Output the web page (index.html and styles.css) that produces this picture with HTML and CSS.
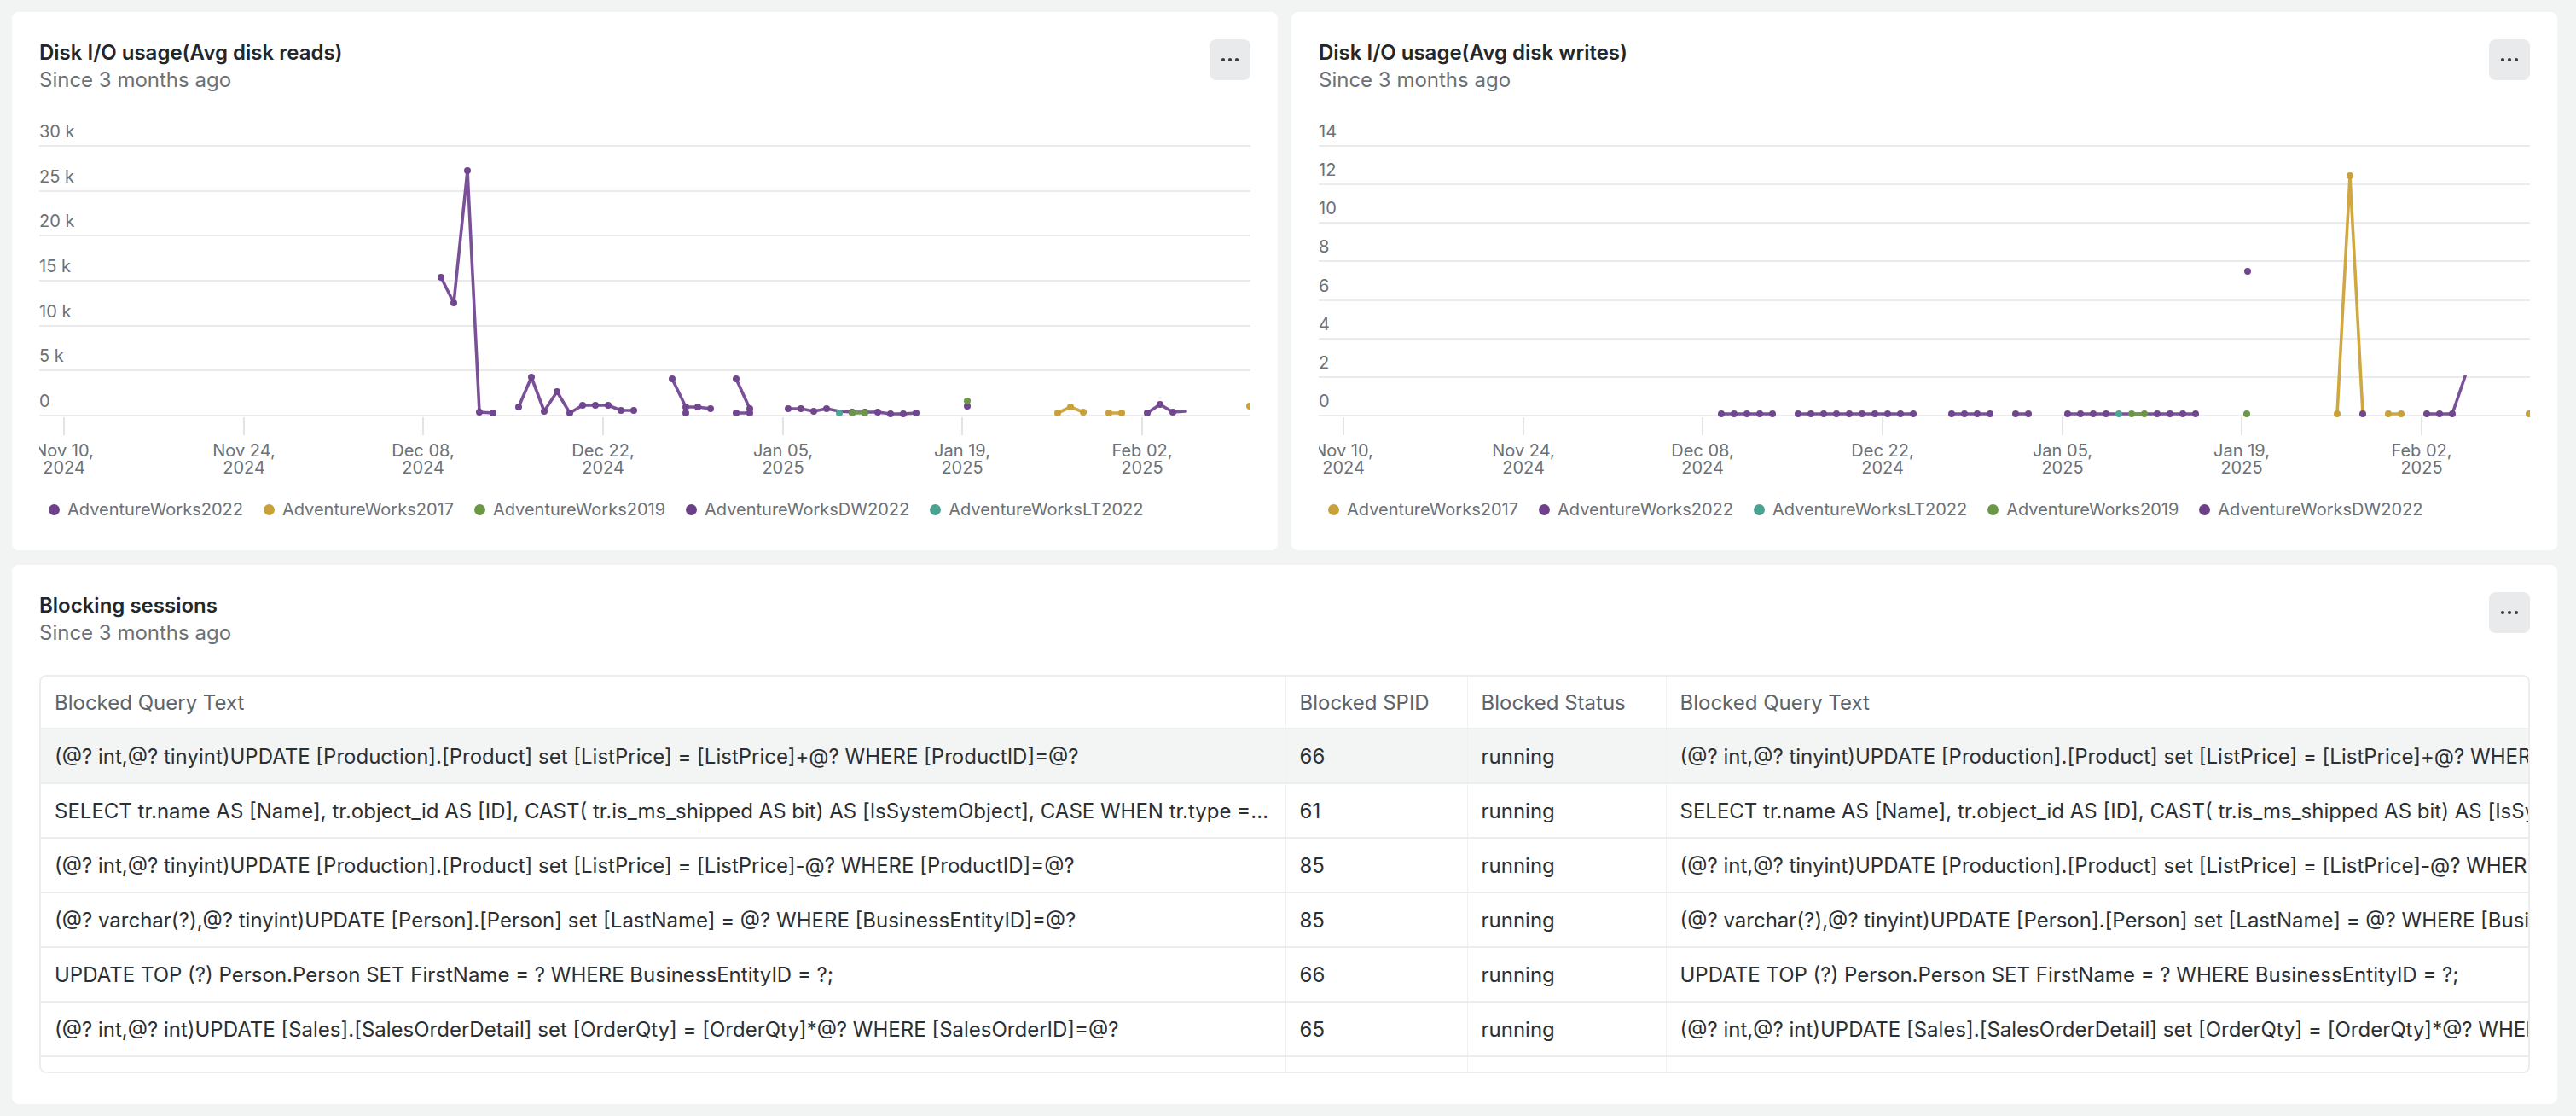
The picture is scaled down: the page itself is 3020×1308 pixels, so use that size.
FILE: index.html
```html
<!DOCTYPE html>
<html lang="en">
<head>
<meta charset="utf-8">
<title>Disk I/O dashboard</title>
<link rel="stylesheet" href="styles.css">
</head>
<body>
<div class="page">
  <div class="top-row">
    <section class="card">
      <header class="card-head">
        <div class="head-text">
          <h2 class="card-title">Disk I/O usage(Avg disk reads)</h2>
          <p class="card-sub">Since 3 months ago</p>
        </div>
        <button class="more" aria-label="More">
          <svg width="24" height="8" viewBox="0 0 24 8"><circle cx="4" cy="4" r="2.1"/><circle cx="12" cy="4" r="2.1"/><circle cx="20" cy="4" r="2.1"/></svg>
        </button>
      </header>
      <svg class="chart" width="1420" height="464" viewBox="0 0 1420 464">
        <g class="grid">
          <line x1="0" y1="61" x2="1420" y2="61"/>
          <line x1="0" y1="114" x2="1420" y2="114"/>
          <line x1="0" y1="166" x2="1420" y2="166"/>
          <line x1="0" y1="219" x2="1420" y2="219"/>
          <line x1="0" y1="272" x2="1420" y2="272"/>
          <line x1="0" y1="324" x2="1420" y2="324"/>
          <line x1="0" y1="377" x2="1420" y2="377"/>
        </g>
        <g class="ylab">
          <text x="0" y="51">30 k</text>
          <text x="0" y="104">25 k</text>
          <text x="0" y="156">20 k</text>
          <text x="0" y="209">15 k</text>
          <text x="0" y="262">10 k</text>
          <text x="0" y="314">5 k</text>
          <text x="0" y="367">0</text>
        </g>
        <g class="ticks">
          <line x1="29" y1="379" x2="29" y2="400"/>
          <line x1="240" y1="379" x2="240" y2="400"/>
          <line x1="450" y1="379" x2="450" y2="400"/>
          <line x1="661" y1="379" x2="661" y2="400"/>
          <line x1="872" y1="379" x2="872" y2="400"/>
          <line x1="1082" y1="379" x2="1082" y2="400"/>
          <line x1="1293" y1="379" x2="1293" y2="400"/>
        </g>
        <g class="xlab">
          <text x="29" y="425">Nov 10,</text><text x="29" y="445">2024</text>
          <text x="240" y="425">Nov 24,</text><text x="240" y="445">2024</text>
          <text x="450" y="425">Dec 08,</text><text x="450" y="445">2024</text>
          <text x="661" y="425">Dec 22,</text><text x="661" y="445">2024</text>
          <text x="872" y="425">Jan 05,</text><text x="872" y="445">2025</text>
          <text x="1082" y="425">Jan 19,</text><text x="1082" y="445">2025</text>
          <text x="1293" y="425">Feb 02,</text><text x="1293" y="445">2025</text>
        </g>
        <g class="s purple">
          <polyline points="471,215 486,245 502,90 516,373 532,374"/>
          <polyline points="562,367 577,332 592,372 607,349 622,374 637,365 652,365 667,365 682,371 697,371"/>
          <polyline points="742,334 758,367 772,367 787,369"/>
          <polyline points="817,334 833,369"/>
          <polyline points="817,374 833,374"/>
          <polyline points="878,369 893,369 908,372 923,369 938,372 953,373 968,373 983,373 998,375 1013,375 1028,374"/>
          <polyline points="1299,374 1314,364 1329,373 1344,372"/>
          <circle cx="471" cy="215" r="4"/><circle cx="486" cy="245" r="4"/><circle cx="502" cy="90" r="4"/><circle cx="516" cy="373" r="4"/><circle cx="532" cy="374" r="4"/>
          <circle cx="562" cy="367" r="4"/><circle cx="577" cy="332" r="4"/><circle cx="592" cy="372" r="4"/><circle cx="607" cy="349" r="4"/><circle cx="622" cy="374" r="4"/><circle cx="637" cy="365" r="4"/><circle cx="652" cy="365" r="4"/><circle cx="667" cy="365" r="4"/><circle cx="682" cy="371" r="4"/><circle cx="697" cy="371" r="4"/>
          <circle cx="742" cy="334" r="4"/><circle cx="758" cy="367" r="4"/><circle cx="772" cy="367" r="4"/><circle cx="787" cy="369" r="4"/><circle cx="758" cy="374" r="4"/>
          <circle cx="817" cy="334" r="4"/><circle cx="833" cy="369" r="4"/><circle cx="817" cy="374" r="4"/><circle cx="833" cy="374" r="4"/>
          <circle cx="878" cy="369" r="4"/><circle cx="893" cy="369" r="4"/><circle cx="908" cy="372" r="4"/><circle cx="923" cy="369" r="4"/><circle cx="953" cy="373" r="4"/><circle cx="968" cy="373" r="4"/><circle cx="983" cy="373" r="4"/><circle cx="998" cy="375" r="4"/><circle cx="1013" cy="375" r="4"/><circle cx="1028" cy="374" r="4"/>
          <circle cx="1088" cy="366" r="4"/>
          <circle cx="1299" cy="374" r="4"/><circle cx="1314" cy="364" r="4"/><circle cx="1329" cy="373" r="4"/>
        </g>
        <g class="s gold">
          <polyline points="1194,374 1209,367 1224,373"/>
          <polyline points="1254,374 1269,374"/>
          <circle cx="1194" cy="374" r="4"/><circle cx="1209" cy="367" r="4"/><circle cx="1224" cy="373" r="4"/>
          <circle cx="1254" cy="374" r="4"/><circle cx="1269" cy="374" r="4"/>
          <circle cx="1419" cy="366" r="4"/>
        </g>
        <g class="s green">
          <polyline points="953,374 968,374"/>
          <circle cx="953" cy="374" r="4"/><circle cx="968" cy="374" r="4"/>
          <circle cx="1088" cy="360" r="4"/>
        </g>
        <g class="s teal">
          <circle cx="938" cy="374" r="4"/>
        </g>
      </svg>
      <ul class="legend">
        <li><span class="dot c-purple"></span>AdventureWorks2022</li>
        <li><span class="dot c-gold"></span>AdventureWorks2017</li>
        <li><span class="dot c-green"></span>AdventureWorks2019</li>
        <li><span class="dot c-purple2"></span>AdventureWorksDW2022</li>
        <li><span class="dot c-teal"></span>AdventureWorksLT2022</li>
      </ul>
    </section>

    <section class="card">
      <header class="card-head">
        <div class="head-text">
          <h2 class="card-title">Disk I/O usage(Avg disk writes)</h2>
          <p class="card-sub">Since 3 months ago</p>
        </div>
        <button class="more" aria-label="More">
          <svg width="24" height="8" viewBox="0 0 24 8"><circle cx="4" cy="4" r="2.1"/><circle cx="12" cy="4" r="2.1"/><circle cx="20" cy="4" r="2.1"/></svg>
        </button>
      </header>
      <svg class="chart" width="1420" height="464" viewBox="0 0 1420 464">
        <g class="grid">
          <line x1="0" y1="61" x2="1420" y2="61"/>
          <line x1="0" y1="106" x2="1420" y2="106"/>
          <line x1="0" y1="151" x2="1420" y2="151"/>
          <line x1="0" y1="196" x2="1420" y2="196"/>
          <line x1="0" y1="242" x2="1420" y2="242"/>
          <line x1="0" y1="287" x2="1420" y2="287"/>
          <line x1="0" y1="332" x2="1420" y2="332"/>
          <line x1="0" y1="377" x2="1420" y2="377"/>
        </g>
        <g class="ylab">
          <text x="0" y="51">14</text>
          <text x="0" y="96">12</text>
          <text x="0" y="141">10</text>
          <text x="0" y="186">8</text>
          <text x="0" y="232">6</text>
          <text x="0" y="277">4</text>
          <text x="0" y="322">2</text>
          <text x="0" y="367">0</text>
        </g>
        <g class="ticks">
          <line x1="29" y1="379" x2="29" y2="400"/>
          <line x1="240" y1="379" x2="240" y2="400"/>
          <line x1="450" y1="379" x2="450" y2="400"/>
          <line x1="661" y1="379" x2="661" y2="400"/>
          <line x1="872" y1="379" x2="872" y2="400"/>
          <line x1="1082" y1="379" x2="1082" y2="400"/>
          <line x1="1293" y1="379" x2="1293" y2="400"/>
        </g>
        <g class="xlab">
          <text x="29" y="425">Nov 10,</text><text x="29" y="445">2024</text>
          <text x="240" y="425">Nov 24,</text><text x="240" y="445">2024</text>
          <text x="450" y="425">Dec 08,</text><text x="450" y="445">2024</text>
          <text x="661" y="425">Dec 22,</text><text x="661" y="445">2024</text>
          <text x="872" y="425">Jan 05,</text><text x="872" y="445">2025</text>
          <text x="1082" y="425">Jan 19,</text><text x="1082" y="445">2025</text>
          <text x="1293" y="425">Feb 02,</text><text x="1293" y="445">2025</text>
        </g>
        <g class="s gold">
          <polyline points="1194,375 1209,96 1224,375"/>
          <polyline points="1254,375 1269,375"/>
          <circle cx="1194" cy="375" r="4"/><circle cx="1209" cy="96" r="4"/>
          <circle cx="1254" cy="375" r="4"/><circle cx="1269" cy="375" r="4"/>
          <circle cx="1419" cy="375" r="4"/>
        </g>
        <g class="s purple">
          <polyline points="472,375 487,375 502,375 517,375 532,375"/>
          <polyline points="562,375 577,375 592,375 607,375 622,375 637,375 652,375 667,375 682,375 697,375"/>
          <polyline points="742,375 757,375 772,375 787,375"/>
          <polyline points="817,375 832,375"/>
          <polyline points="878,375 893,375 908,375 923,375 938,375 953,375 968,375 983,375 998,375 1013,375 1028,375"/>
          <polyline points="1299,375 1314,375 1329,375 1344,331"/>
          <circle cx="472" cy="375" r="4"/><circle cx="487" cy="375" r="4"/><circle cx="502" cy="375" r="4"/><circle cx="517" cy="375" r="4"/><circle cx="532" cy="375" r="4"/>
          <circle cx="562" cy="375" r="4"/><circle cx="577" cy="375" r="4"/><circle cx="592" cy="375" r="4"/><circle cx="607" cy="375" r="4"/><circle cx="622" cy="375" r="4"/><circle cx="637" cy="375" r="4"/><circle cx="652" cy="375" r="4"/><circle cx="667" cy="375" r="4"/><circle cx="682" cy="375" r="4"/><circle cx="697" cy="375" r="4"/>
          <circle cx="742" cy="375" r="4"/><circle cx="757" cy="375" r="4"/><circle cx="772" cy="375" r="4"/><circle cx="787" cy="375" r="4"/>
          <circle cx="817" cy="375" r="4"/><circle cx="832" cy="375" r="4"/>
          <circle cx="878" cy="375" r="4"/><circle cx="893" cy="375" r="4"/><circle cx="908" cy="375" r="4"/><circle cx="923" cy="375" r="4"/><circle cx="983" cy="375" r="4"/><circle cx="998" cy="375" r="4"/><circle cx="1013" cy="375" r="4"/><circle cx="1028" cy="375" r="4"/>
          <circle cx="1089" cy="208" r="4"/>
          <circle cx="1224" cy="375" r="4"/>
          <circle cx="1299" cy="375" r="4"/><circle cx="1314" cy="375" r="4"/><circle cx="1329" cy="375" r="4"/>
        </g>
        <g class="s green">
          <polyline points="953,375 968,375"/>
          <circle cx="953" cy="375" r="4"/><circle cx="968" cy="375" r="4"/>
          <circle cx="1088" cy="375" r="4"/>
        </g>
        <g class="s teal">
          <circle cx="938" cy="375" r="4"/>
        </g>
      </svg>
      <ul class="legend">
        <li><span class="dot c-gold"></span>AdventureWorks2017</li>
        <li><span class="dot c-purple"></span>AdventureWorks2022</li>
        <li><span class="dot c-teal"></span>AdventureWorksLT2022</li>
        <li><span class="dot c-green"></span>AdventureWorks2019</li>
        <li><span class="dot c-purple2"></span>AdventureWorksDW2022</li>
      </ul>
    </section>
  </div>

  <section class="card card-table">
    <header class="card-head">
      <div class="head-text">
        <h2 class="card-title">Blocking sessions</h2>
        <p class="card-sub">Since 3 months ago</p>
      </div>
      <button class="more" aria-label="More">
        <svg width="24" height="8" viewBox="0 0 24 8"><circle cx="4" cy="4" r="2.1"/><circle cx="12" cy="4" r="2.1"/><circle cx="20" cy="4" r="2.1"/></svg>
      </button>
    </header>
    <div class="tbl-wrap">
      <table class="tbl">
        <colgroup>
          <col class="w1"><col class="w2"><col class="w3"><col class="w4">
        </colgroup>
        <thead>
          <tr><th>Blocked Query Text</th><th>Blocked SPID</th><th>Blocked Status</th><th>Blocked Query Text</th></tr>
        </thead>
        <tbody>
          <tr class="hl"><td>(@? int,@? tinyint)UPDATE [Production].[Product] set [ListPrice] = [ListPrice]+@? WHERE [ProductID]=@?</td><td>66</td><td>running</td><td>(@? int,@? tinyint)UPDATE [Production].[Product] set [ListPrice] = [ListPrice]+@? WHERE [ProductID]=@?</td></tr>
          <tr><td>SELECT tr.name AS [Name], tr.object_id AS [ID], CAST( tr.is_ms_shipped AS bit) AS [IsSystemObject], CASE WHEN tr.type = N'TA' THEN 1 ELSE 0 END AS [IsClr]</td><td>61</td><td>running</td><td>SELECT tr.name AS [Name], tr.object_id AS [ID], CAST( tr.is_ms_shipped AS bit) AS [IsSystemObject], CASE WHEN tr.type = N'TA' THEN 1 ELSE 0 END AS [IsClr]</td></tr>
          <tr><td>(@? int,@? tinyint)UPDATE [Production].[Product] set [ListPrice] = [ListPrice]-@? WHERE [ProductID]=@?</td><td>85</td><td>running</td><td>(@? int,@? tinyint)UPDATE [Production].[Product] set [ListPrice] = [ListPrice]-@? WHERE [ProductID]=@?</td></tr>
          <tr><td>(@? varchar(?),@? tinyint)UPDATE [Person].[Person] set [LastName] = @? WHERE [BusinessEntityID]=@?</td><td>85</td><td>running</td><td>(@? varchar(?),@? tinyint)UPDATE [Person].[Person] set [LastName] = @? WHERE [BusinessEntityID]=@?</td></tr>
          <tr><td>UPDATE TOP (?) Person.Person SET FirstName = ? WHERE BusinessEntityID = ?;</td><td>66</td><td>running</td><td>UPDATE TOP (?) Person.Person SET FirstName = ? WHERE BusinessEntityID = ?;</td></tr>
          <tr><td>(@? int,@? int)UPDATE [Sales].[SalesOrderDetail] set [OrderQty] = [OrderQty]*@? WHERE [SalesOrderID]=@?</td><td>65</td><td>running</td><td>(@? int,@? int)UPDATE [Sales].[SalesOrderDetail] set [OrderQty] = [OrderQty]*@? WHERE [SalesOrderID]=@?</td></tr>
          <tr><td>&nbsp;</td><td>&nbsp;</td><td>&nbsp;</td><td>&nbsp;</td></tr>
        </tbody>
      </table>
    </div>
  </section>
</div>
</body>
</html>
```

FILE: styles.css
```css
* { box-sizing: border-box; }
html, body { margin: 0; padding: 0; }
body {
  background: #f2f3f3;
  font-family: Inter, "Noto Sans", sans-serif;
  color: #22272b;
  width: 3020px;
  height: 1308px;
  overflow: hidden;
}
.page {
  padding: 14px 22px 14px 14px;
  display: flex;
  flex-direction: column;
  gap: 17px;
}
.top-row {
  display: grid;
  grid-template-columns: 1484px 1484px;
  gap: 16px;
}
.card {
  background: #ffffff;
  border-radius: 8px;
  padding: 32px 32px 36px 32px;
  display: flex;
  flex-direction: column;
}
.top-row .card { height: 631px; }
.card-table { height: 632px; }
.card-head {
  display: flex;
  justify-content: space-between;
  align-items: flex-start;
  height: 64px;
}
.card-title {
  margin: 0;
  font-size: 24px;
  line-height: 32px;
  font-weight: 600;
  color: #22272b;
}
.card-sub {
  margin: 0;
  font-size: 24px;
  line-height: 32px;
  color: #6b7177;
  font-weight: 400;
}
.more {
  width: 48px;
  height: 48px;
  border: 0;
  padding: 0;
  background: #e9eaeb;
  border-radius: 8px;
  display: flex;
  align-items: center;
  justify-content: center;
  cursor: pointer;
}
.more svg circle { fill: #353a3f; }

.chart {
  display: block;
  overflow: hidden;
  font-family: Inter, "Noto Sans", sans-serif;
}
.grid line { stroke: #ebebeb; stroke-width: 2; }
.ticks line { stroke: #e4e4e4; stroke-width: 2; }
.ylab text { font-size: 20px; fill: #6b7177; }
.xlab text { font-size: 20px; fill: #6b7177; text-anchor: middle; }
.s polyline { fill: none; stroke-width: 3.6; stroke-linejoin: round; stroke-linecap: round; }
.s.purple polyline { stroke: #7a5198; }
.s.purple circle { fill: #71468f; }
.s.gold polyline { stroke: #cfa842; }
.s.gold circle { fill: #c9a13b; }
.s.green polyline { stroke: #6f9c4c; }
.s.green circle { fill: #6a9847; }
.s.teal circle { fill: #4ea593; }

.legend {
  list-style: none;
  margin: 11px 0 0 0;
  padding: 0 0 0 11px;
  display: flex;
  gap: 24px;
  font-size: 20px;
  line-height: 24px;
  color: #6b7177;
}
.legend li { display: flex; align-items: center; gap: 9px; }
.dot { width: 13px; height: 13px; border-radius: 50%; display: inline-block; }
.c-purple { background: #6f418d; }
.c-purple2 { background: #6c3f89; }
.c-gold { background: #c9a13b; }
.c-green { background: #6a9847; }
.c-teal { background: #4aa390; }

.tbl-wrap {
  margin-top: 33px;
  height: 467px;
  border: 2px solid #eceeee;
  border-radius: 8px;
  overflow: hidden;
}
.tbl {
  border-collapse: collapse;
  table-layout: fixed;
  width: 3405px;
  font-size: 24px;
}
.w1 { width: 1459px; }
.w2 { width: 213px; }
.w3 { width: 233px; }
.w4 { width: 1500px; }
.tbl th, .tbl td {
  padding: 0 16px;
  text-align: left;
  white-space: nowrap;
  overflow: hidden;
  text-overflow: ellipsis;
  border-left: 1px solid #f0f1f1;
  border-bottom: 2px solid #eceeee;
  vertical-align: middle;
}
.tbl th:first-child, .tbl td:first-child { border-left: 0; }
.tbl td:last-child, .tbl th:last-child { text-overflow: clip; }
.tbl th {
  height: 61px;
  font-weight: 400;
  color: #5d646a;
}
.tbl td {
  height: 64px;
  color: #2b3034;
}
.tbl tr.hl td { background: #f3f4f4; }
```
